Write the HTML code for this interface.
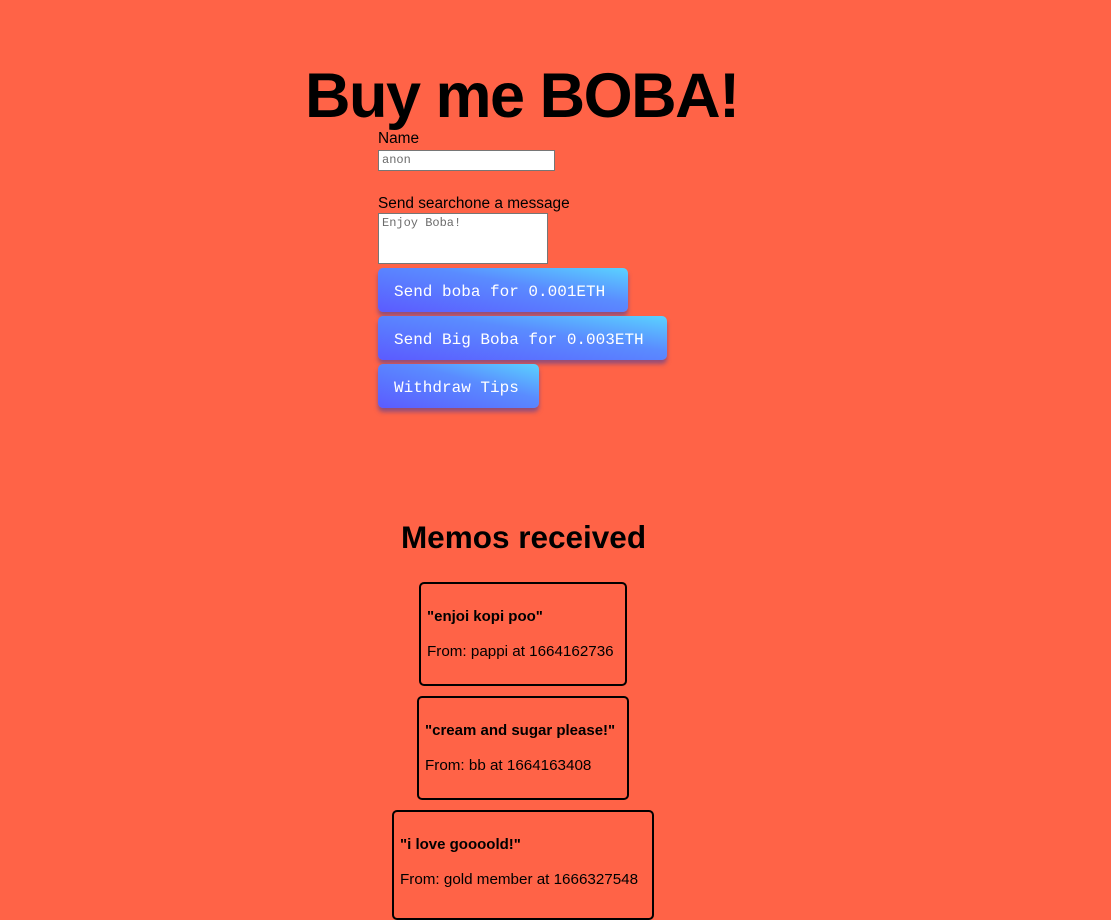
<!DOCTYPE html>
<html><head><style>
body{margin:0;width:1111px;height:913px;background:#ff6347;font-family:"Liberation Sans","DejaVu Sans",sans-serif;color:#000;overflow:hidden;position:relative}
.a{position:absolute;white-space:nowrap}
h1{position:absolute;left:305px;top:60px;margin:0;font-size:63px;font-weight:bold;letter-spacing:-1.5px;line-height:72px}
.lbl{font-size:15.4px}
.inp{position:absolute;background:#fff;border:1px solid #767676;box-sizing:border-box;font-family:"Liberation Mono",monospace;font-size:12px;color:#6b6b6b;padding:2px 3px}
.btn{position:absolute;left:378px;height:44px;border-radius:5px;background:linear-gradient(to top right,#5b5bff 0%,#5a8cff 60%,#5ad2ff 100%);box-shadow:0 4px 4px rgba(60,60,160,.55);color:#fff;font-family:"Liberation Mono",monospace;font-size:16px;line-height:48px;padding-left:16px;box-sizing:border-box}
.memo{position:absolute;border:2px solid #000;border-radius:5px;box-sizing:border-box;padding:0 6px;white-space:nowrap}
.memo b{display:block;margin-top:24px;font-size:15px}
.memo div{margin-top:18px;font-size:15.2px}
</style></head><body>
<h1>Buy me BOBA!</h1>
<div class="a lbl" style="left:378px;top:130px">Name</div>
<div class="inp" style="left:378px;top:150px;width:177px;height:21px">anon</div>
<div class="a lbl" style="left:378px;top:195px">Send searchone a message</div>
<div class="inp" style="left:378px;top:213px;width:170px;height:51px">Enjoy Boba!</div>
<div class="btn" style="top:268px;width:250px">Send boba for 0.001ETH</div>
<div class="btn" style="top:316px;width:289px">Send Big Boba for 0.003ETH</div>
<div class="btn" style="top:364px;width:161px">Withdraw Tips</div>
<div class="a" style="left:0;width:1047px;text-align:center;top:519px;font-size:31.5px;font-weight:bold">Memos received</div>
<div class="memo" style="left:419px;top:582px;width:208px;height:104px"><b>"enjoi kopi poo"</b><div>From: pappi at 1664162736</div></div>
<div class="memo" style="left:417px;top:696px;width:212px;height:104px"><b>"cream and sugar please!"</b><div>From: bb at 1664163408</div></div>
<div class="memo" style="left:392px;top:810px;width:262px;height:110px"><b>"i love goooold!"</b><div>From: gold member at 1666327548</div></div>
</body></html>
